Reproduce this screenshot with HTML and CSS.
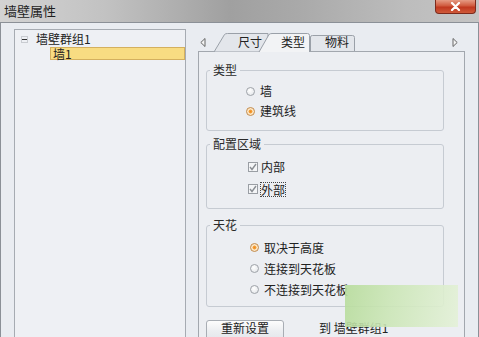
FILE: index.html
```html
<!DOCTYPE html>
<html lang="zh-CN">
<head>
    <meta charset="UTF-8">
    <title>墙壁属性</title>
    <link rel="stylesheet" href="styles.css">
</head>

<body>
    <div class="window">
        <!-- 标题栏 -->
        <div class="titlebar">
            <span class="title">墙壁属性</span>
            <button class="close" type="button">
                <svg width="11" height="9" viewBox="0 0 11 9">
                    <path d="M2 1 L9 8 M9 1 L2 8" stroke="#fff" stroke-width="2.2" stroke-linecap="round"/>
                </svg>
            </button>
        </div>

        <div class="client">
            <!-- 左侧树 -->
            <div class="tree">
                <div class="node">
                    <span class="toggle"></span>
                    <span>墙壁群组1</span>
                </div>
                <div class="node child selected">墙1</div>
            </div>

            <!-- 右侧选项卡 -->
            <div class="tabctl">
                <div class="tabs">
                    <svg class="tabshapes" width="267" height="19" viewBox="0 0 267 19">
                        <path d="M16 19 L26.5 1.5 Q27.5 0.5 29.5 0.5 L70 0.5 L70 19 Z" fill="#e3e6eb" stroke="#9aa0a8"/>
                        <path d="M112.5 19 L112.5 4 Q112.5 2.5 114.5 2.5 L154.5 2.5 Q156.5 2.5 156.5 4.5 L156.5 18.5" fill="#e3e6eb" stroke="#9aa0a8"/>
                        <path d="M112.5 18.5 L156.5 18.5" stroke="#a2a7ae"/>
                        <path d="M0 18.5 L16 18.5 M156.5 18.5 L267 18.5" stroke="#a2a7ae"/>
                        <path d="M61 19.5 L71 1.5 Q72 0.5 74 0.5 L109.5 0.5 Q111.5 0.5 111.5 2.5 L111.5 19.5 Z" fill="#f2f3f5"/>
                        <path d="M61 19 L71 1.5 Q72 0.5 74 0.5 L109.5 0.5 Q111.5 0.5 111.5 2.5 L111.5 19" fill="none" stroke="#9aa0a8"/>
                    </svg>
                    <div class="tablabels">
                        <svg class="arrow left" width="6" height="9" viewBox="0 0 6 9">
                            <path d="M5 0.5 L0.8 4.5 L5 8.5 Z" fill="#f4f4f4" stroke="#666"/>
                        </svg>
                        <span class="tab first">尺寸</span>
                        <span class="tab active">类型</span>
                        <span class="tab">物料</span>
                        <svg class="arrow right" width="6" height="9" viewBox="0 0 6 9">
                            <path d="M1 0.5 L5.2 4.5 L1 8.5 Z" fill="#f4f4f4" stroke="#666"/>
                        </svg>
                    </div>
                </div>

                <div class="pane">
                    <fieldset class="group g1">
                        <legend>类型</legend>
                        <div class="opts">
                            <label class="opt"><span class="radio"></span>墙</label>
                            <label class="opt"><span class="radio on"></span>建筑线</label>
                        </div>
                    </fieldset>

                    <fieldset class="group g2">
                        <legend>配置区域</legend>
                        <div class="opts">
                            <label class="opt"><span class="check"><svg width="8" height="8" viewBox="0 0 8 8"><path d="M1 4 L3 6.5 L7 1" fill="none" stroke="#8a8e94" stroke-width="1.4"/></svg></span>内部</label>
                            <label class="opt"><span class="check"><svg width="8" height="8" viewBox="0 0 8 8"><path d="M1 4 L3 6.5 L7 1" fill="none" stroke="#8a8e94" stroke-width="1.4"/></svg></span><span class="focus">外部</span></label>
                        </div>
                    </fieldset>

                    <fieldset class="group g3">
                        <legend>天花</legend>
                        <div class="opts">
                            <label class="opt"><span class="radio on"></span>取决于高度</label>
                            <label class="opt"><span class="radio"></span>连接到天花板</label>
                            <label class="opt"><span class="radio"></span>不连接到天花板</label>
                        </div>
                    </fieldset>

                    <div class="actions">
                        <button class="btn" type="button">重新设置</button>
                        <span class="target">到 墙壁群组1</span>
                    </div>
                </div>
            </div>
        </div>

        <!-- 水印 -->
        <div class="watermark"></div>
    </div>
</body></html>
```

FILE: styles.css
```css
html,
body {
    margin: 0;
    padding: 0;
}

body {
    width: 479px;
    height: 337px;
    overflow: hidden;
    font: 12px/14px "Noto Sans CJK SC", "Microsoft YaHei", sans-serif;
    color: #222;
}

/*窗口外框*/
.window {
    position: relative;
    display: flex;
    flex-direction: column;
    width: 479px;
    height: 337px;
    background: linear-gradient(90deg, #6f6f6f 0, #8a8a8a 3px, #b9b9b9 3px, #b9b9b9 476px, #8c8c8c 476px);
}

/*标题栏*/
.titlebar {
    display: flex;
    align-items: flex-start;
    height: 22px;
    flex: none;
    background: linear-gradient(90deg, #d3d3d3 0%, #c2c2c2 22%, #a0a0a0 48%, #a9a9a9 62%, #bdbdbd 85%, #c4c4c4 100%);
}

.title {
    margin: 3px 0 0 4px;
    font-size: 13px;
    line-height: 15px;
    color: #1e1e1e;
}

.close {
    display: flex;
    align-items: center;
    justify-content: center;
    width: 41px;
    height: 14px;
    margin: 0 3px 0 auto;
    padding: 0;
    border: 1px solid #7d2a1c;
    border-top: none;
    border-radius: 0 0 4px 4px;
    background: linear-gradient(#e59b84, #d05a3e 45%, #c0381f 55%, #cf5a3a);
}

/*客户区*/
.client {
    display: flex;
    flex: 1;
    min-height: 0;
    padding: 6px 0 0 13px;
    border: 1px solid #8b9097;
    border-bottom: none;
    background-color: #e9ecf1;
}

/*树*/
.tree {
    width: 172px;
    flex: none;
    box-sizing: border-box;
    padding-top: 1px;
    border: 1px solid #a6abb2;
    border-bottom: none;
    background-color: #eef0f4;
}

.node {
    display: flex;
    align-items: center;
    height: 16px;
    padding-left: 6px;
}

.toggle {
    position: relative;
    width: 7px;
    height: 7px;
    margin-right: 8px;
    box-sizing: border-box;
    border: 1px solid #c9ccd1;
}

.toggle::after {
    content: "";
    position: absolute;
    left: 0;
    top: 2px;
    width: 5px;
    height: 1px;
    background-color: #333;
}

.node.child {
    height: 11px;
    margin-left: 35px;
    padding-left: 2px;
    line-height: 11px;
}

.selected {
    border: 1px solid #d4b05e;
    background-color: #f8dc82;
}

/*选项卡*/
.tabctl {
    display: flex;
    flex-direction: column;
    width: 267px;
    margin: 4px 0 0 12px;
}

.tabs {
    display: grid;
    position: relative;
    z-index: 1;
    height: 18px;
}

.tabs > * {
    grid-area: 1 / 1;
}

.tablabels {
    display: flex;
    align-items: center;
    height: 18px;
}

.arrow.left {
    margin-left: 2px;
}

.arrow.right {
    margin: 0 7px 0 auto;
}

.tab {
    width: 24px;
    font-size: 12px;
    line-height: 14px;
    color: #222;
}

.tab.first {
    margin-left: 32px;
}

.tab.active {
    margin-left: 19px;
}

.tab.active + .tab {
    margin-left: 20px;
}

.pane {
    flex: 1;
    padding: 11px 0 0 7px;
    border: 1px solid #a2a7ae;
    border-bottom: none;
    background-color: #eceef2;
}

/*分组框*/
.group {
    width: 238px;
    box-sizing: border-box;
    margin: 0;
    padding: 0;
    border: 1px solid #c6cbd2;
    border-radius: 3px;
}

.group legend {
    margin-left: 3px;
    padding: 0 3px;
    font-size: 12px;
    line-height: 14px;
    color: #2a2a2a;
}

.g1 {
    height: 68px;
}

.g2 {
    height: 72px;
    margin-top: 6px;
}

.g3 {
    height: 89px;
    margin-top: 9px;
}

.opts {
    display: flex;
    flex-direction: column;
}

.g1 .opts {
    padding: 4px 0 0 39px;
}

.g2 .opts {
    padding: 5px 0 0 41px;
}

.g3 .opts {
    padding: 5px 0 0 43px;
}

.opt {
    display: flex;
    align-items: center;
    height: 20px;
}

.g2 .opt {
    height: 22px;
}

.g3 .opt {
    height: 21px;
}

.radio {
    width: 9px;
    height: 9px;
    margin-right: 5px;
    box-sizing: border-box;
    border: 1px solid #9ea2a8;
    border-radius: 50%;
    background: radial-gradient(circle at 40% 35%, #ffffff, #dfe2e6);
}

.radio.on {
    border-color: #c28a4a;
    background: radial-gradient(circle, #f08a1c 0, #f4a443 35%, #fbe2bd 45%, #fff3e2 100%);
}

.check {
    display: flex;
    align-items: center;
    justify-content: center;
    width: 10px;
    height: 10px;
    margin-right: 3px;
    box-sizing: border-box;
    border: 1px solid #9a9ea4;
    background-color: #f4f5f7;
}

.focus {
    outline: 1px dotted #444;
    line-height: 13px;
}

/*底部按钮*/
.actions {
    display: flex;
    align-items: flex-start;
    margin-top: 13px;
}

.btn {
    width: 78px;
    height: 22px;
    box-sizing: border-box;
    padding: 0 0 6px;
    border: 1px solid #a8adb4;
    border-radius: 3px;
    background: linear-gradient(#fdfdfd, #eceef1 50%, #e2e5ea);
    font: 12px/14px "Noto Sans CJK SC", sans-serif;
    color: #222;
}

.target {
    margin: 1px 0 0 35px;
}

/*水印*/
.watermark {
    position: absolute;
    left: 345px;
    top: 285px;
    width: 113px;
    height: 42px;
    background: linear-gradient(100deg, #b7dc9b 0%, #cbe6b6 40%, #e4f1d8 100%);
    opacity: .9;
}
```
